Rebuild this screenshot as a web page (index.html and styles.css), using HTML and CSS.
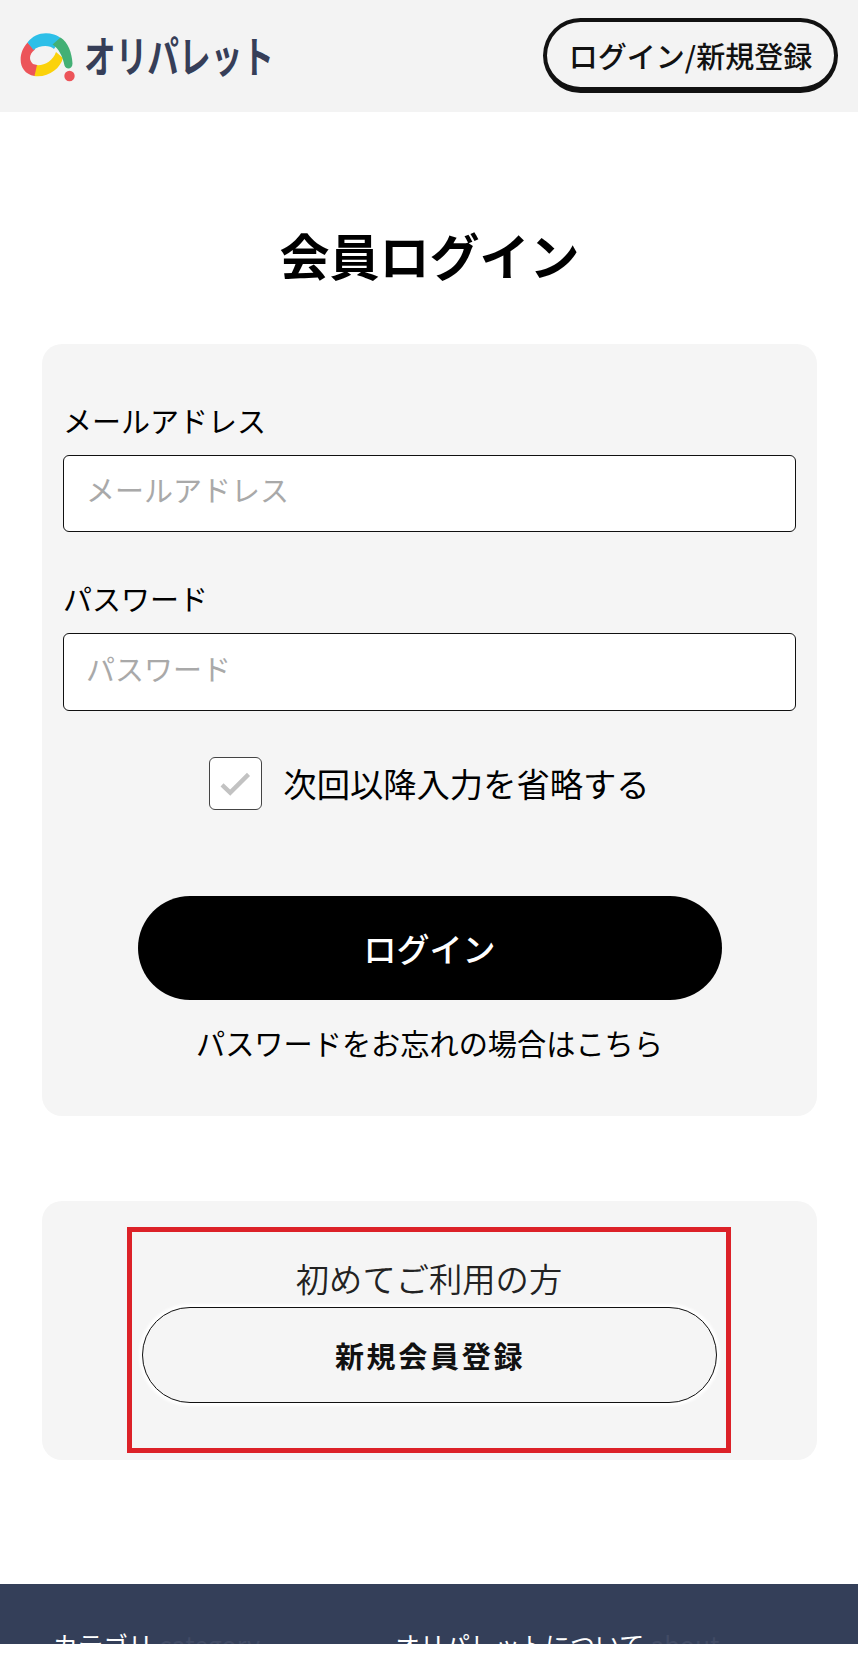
FILE: index.html
```
<!DOCTYPE html>
<html lang="ja">
<head>
  <meta charset="UTF-8">
  <meta name="viewport" content="width=device-width, initial-scale=1.0">
  <title>会員ログイン</title>
  <link rel="stylesheet" href="styles.css">
</head>
<body>
  <header class="header">
    <svg class="logo" viewBox="0 0 260 70" fill="none" role="img" aria-label="オリパレット">
      <!-- ring -->
      <path d="M17 43C25 44 34 39 37 30L44 36C41 47 29 56 15 54Z" fill="#fbd20a"/>
      <path d="M8.500 20.500L16 27.500C10 32 9.500 38 14 42L18 43L15.500 54C-1 51 -2 32 8.500 20.500Z" fill="#ec5459"/>
      <path d="M8.500 20.500C15 12 25 9.500 35 12.500C38 13.500 40.500 14.500 42 16.500L35 27C31 22.500 20 23 14.500 28Z" fill="#2dbfe8"/>
      <path d="M33.500 22.500L41.500 15.500C49 20 53 31 53.500 41.500C53.500 47.500 47 48 45.500 43.500C43.500 34 40 27 33.500 22.500Z" fill="#43b075"/>
      <circle cx="50.500" cy="54" r="5.200" fill="#ec5459"/>
      <text class="logo-text" x="65" y="51" textLength="190" lengthAdjust="spacingAndGlyphs">オリパレット</text>
    </svg>
    <a class="header-button" href="#">ログイン/新規登録</a>
  </header>

  <main class="main">
    <h1>会員ログイン</h1>

    <form class="card login-card">
      <label class="label" for="email">メールアドレス</label>
      <input class="input" id="email" type="email" placeholder="メールアドレス">

      <label class="label" for="password">パスワード</label>
      <input class="input" id="password" type="password" placeholder="パスワード">

      <div class="remember">
        <span class="checkbox">
          <svg viewBox="0 0 53 53" fill="none">
            <path d="M12.500 28L21 36L40 17" stroke="#c2c2c2" stroke-width="4.500"/>
          </svg>
        </span>
        <span class="remember-text">次回以降入力を省略する</span>
      </div>

      <button class="login-button" type="button">ログイン</button>
      <a class="forgot" href="#">パスワードをお忘れの場合はこちら</a>
    </form>

    <section class="card signup-card">
      <div class="highlight">
        <p class="signup-text">初めてご利用の方</p>
        <a class="signup-button" href="#">新規会員登録</a>
      </div>
    </section>
  </main>

  <footer class="footer">
    <div class="footer-col">カテゴリ<span>category</span></div>
    <div class="footer-col">オリパレットについて<span>about</span></div>
  </footer>
</body>
</html>
```
FILE: styles.css
```
* {
  box-sizing: border-box;
}

body {
  margin: 0;
  background-color: #fff;
  color: #000;
  font-family: "Noto Sans CJK JP", sans-serif;
  font-size: 29px;
}

a {
  color: inherit;
  text-decoration: none;
}

.header {
  display: flex;
  justify-content: space-between;
  align-items: flex-start;
  height: 112px;
  padding: 18px 20px 0 19px;
  background-color: #f3f3f3;
}

.logo {
  width: 260px;
  height: 70px;
  margin-top: 4px;
}

.logo-text {
  font-size: 43px;
  font-weight: 700;
  fill: #363e58;
}

.header-button {
  width: 295px;
  height: 75px;
  border: 4px solid #111;
  border-bottom-width: 6px;
  border-radius: 38px;
  color: #111;
  font-weight: 500;
  line-height: 67px;
  text-align: center;
  white-space: nowrap;
}

.main {
  padding: 0 41px 0 42px;
}

h1 {
  margin: 0;
  padding-top: 106px;
  height: 232px;
  font-size: 50px;
  font-weight: 700;
  line-height: 72px;
  text-align: center;
}

.card {
  display: flex;
  flex-direction: column;
  border-radius: 20px;
  background-color: #f5f5f5;
}

.login-card {
  height: 772px;
  padding: 56px 21px 0 21px;
}

.label {
  height: 55px;
  line-height: 40px;
}

.input {
  height: 77px;
  margin-bottom: 46px;
  padding: 0 22px 9px;
  border: 1px solid #111;
  border-radius: 6px;
  background-color: #fff;
  font: inherit;
}

.input::placeholder {
  color: #a9a9a9;
}

#password {
  height: 78px;
}

.remember {
  display: flex;
  justify-content: center;
  gap: 21px;
  font-size: 33.300px;
  line-height: 51px;
}

.checkbox {
  width: 53px;
  height: 53px;
  border: 1px solid #444;
  border-radius: 6px;
  background-color: #fff;
}

.checkbox svg {
  display: block;
}

.login-button {
  align-self: center;
  width: 584px;
  height: 104px;
  margin-top: 86px;
  border: 0;
  border-radius: 52px;
  background-color: #000;
  color: #fff;
  font: inherit;
  font-size: 33px;
  font-weight: 500;
}

.forgot {
  margin-top: 22px;
  font-size: 29.200px;
  line-height: 40px;
  text-align: center;
}

.signup-card {
  height: 259px;
  margin-top: 85px;
  padding-top: 26px;
  align-items: center;
  color: #222;
}

.highlight {
  display: flex;
  flex-direction: column;
  align-items: center;
  width: 604px;
  height: 226px;
  margin-right: 1px;
  padding-top: 19px;
  border: 5px solid #dc2128;
}

.signup-text {
  margin: 0 0 3px;
  font-size: 33.300px;
  font-weight: 350;
  line-height: 53px;
}

.signup-button {
  width: 575px;
  height: 96px;
  border: 1px solid #111;
  border-radius: 48px;
  box-shadow: 0 0 3px 3px #fff;
  color: #111;
  font-weight: 700;
  letter-spacing: 2.700px;
  line-height: 95px;
  text-align: center;
  text-indent: 2px;
}

.footer {
  display: grid;
  grid-template-columns: 342px 1fr;
  height: 60px;
  margin-top: 124px;
  padding: 42px 0 0 53px;
  overflow: hidden;
  background-color: #343f59;
  color: #fff;
  font-size: 25px;
  line-height: 36px;
}

.footer-col span {
  margin-left: 6px;
  color: #414b65;
}
```
